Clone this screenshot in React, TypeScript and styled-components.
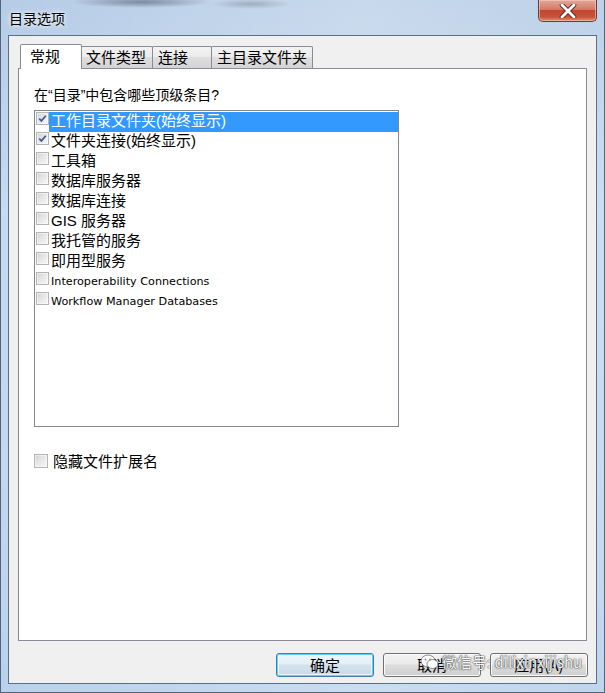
import React from "react";
import styled, { createGlobalStyle } from "styled-components";

const Global = createGlobalStyle`
  html, body { margin: 0; padding: 0; background: #fff; }
  body {
    width: 605px; height: 693px; overflow: hidden;
    font-family: "DejaVu Sans", "Noto Sans CJK SC", sans-serif;
    color: #000;
  }
  * { box-sizing: border-box; }
`;

const Window = styled.div`
  position: relative;
  width: 605px;
  height: 693px;
  display: flex;
  flex-direction: column;
  padding: 0 7px 8px 7px;
  border-left: 1px solid #54637a;
  border-right: 1px solid #54637a;
  border-bottom: 1px solid #54637a;
  background:
    radial-gradient(ellipse 70px 6px at 140px 2px, rgba(70, 80, 95, 0.55), transparent),
    radial-gradient(ellipse 40px 5px at 250px 4px, rgba(90, 100, 115, 0.35), transparent),
    linear-gradient(90deg, rgba(255,255,255,0) 0%, rgba(255,255,255,0.25) 60%, rgba(255,255,255,0.1) 100%),
    linear-gradient(180deg, #b5cce6 0%, #c6daf0 30%, #c2d8ef 70%, #b9d1eb 100%);
`;

const TitleBar = styled.div`
  height: 35px;
  flex: none;
  display: flex;
  justify-content: space-between;
  align-items: flex-start;
  margin-left: -7px;
  margin-right: -7px;
  padding-left: 8px;
  padding-right: 7px;
`;

const Title = styled.div`
  padding-top: 9px;
  font-size: 14px;
  line-height: 18px;
  font-family: "Noto Sans CJK SC", sans-serif;
  color: #000;
  text-shadow: 0 0 6px rgba(255, 255, 255, 0.9), 0 0 3px rgba(255, 255, 255, 0.9);
`;

const CloseButton = styled.div`
  width: 59px;
  height: 22px;
  border: 1px solid #6a3a36;
  border-top: none;
  border-radius: 0 0 5px 5px;
  background: linear-gradient(180deg, #e0a898 0%, #d57a68 45%, #c34630 50%, #c6523b 80%, #e28e70 100%);
  box-shadow: inset 0 0 0 1px rgba(255, 210, 200, 0.55);
  display: flex;
  align-items: center;
  justify-content: center;
`;

const Client = styled.div`
  flex: 1;
  display: flex;
  flex-direction: column;
  background: #f0f0f0;
  border: 1px solid #5b6f88;
  padding: 7px 9px 6px 9px;
`;

const TabStrip = styled.div`
  display: flex;
  align-items: flex-end;
  height: 25px;
  padding-left: 2px;
  position: relative;
  z-index: 1;
`;

const Tab = styled.div<{ $active?: boolean; $w: number }>`
  width: ${(p) => p.$w}px;
  height: ${(p) => (p.$active ? 25 : 22)}px;
  margin-bottom: ${(p) => (p.$active ? -1 : 0)}px;
  margin-left: ${(p) => (p.$active ? -2 : -1)}px;
  margin-right: ${(p) => (p.$active ? -1 : 0)}px;
  position: relative;
  z-index: ${(p) => (p.$active ? 2 : 1)};
  border: 1px solid #898c95;
  border-bottom: none;
  border-radius: 2px 2px 0 0;
  background: ${(p) =>
    p.$active
      ? "#ffffff"
      : "linear-gradient(180deg, #f3f3f3 0%, #ececec 45%, #dedede 50%, #d4d4d4 100%)"};
  font-family: "Noto Sans CJK SC", sans-serif;
  font-size: 15px;
  line-height: 20px;
  padding: ${(p) => (p.$active ? "1px 0 0 9px" : "0 0 0 5px")};
  white-space: nowrap;
  &:first-child { margin-left: 0; }
`;

const Panel = styled.div`
  flex: 1;
  background: #ffffff;
  border: 1px solid #898c95;
  padding: 17px 15px 0 15px;
  display: flex;
  flex-direction: column;
  align-items: flex-start;
`;

const Prompt = styled.div`
  font-family: "Liberation Sans", "Noto Sans CJK SC", sans-serif;
  font-size: 14px;
  line-height: 18px;
`;

const ListBox = styled.div`
  margin-top: 6px;
  width: 365px;
  height: 317px;
  border: 1px solid #828790;
  background: #fff;
  padding: 1px 0 0 1px;
  display: flex;
  flex-direction: column;
`;

const Row = styled.div`
  height: 20px;
  display: flex;
  align-items: stretch;
`;

const Box = styled.span<{ $size?: number }>`
  flex: none;
  width: ${(p) => p.$size ?? 13}px;
  height: ${(p) => p.$size ?? 13}px;
  border: 1px solid #b4b4b4;
  background: linear-gradient(135deg, #d2d2d2 0%, #e6e6e6 45%, #f7f7f7 100%);
  box-shadow: inset 0 0 0 1px rgba(255, 255, 255, 0.5);
  display: flex;
  align-items: center;
  justify-content: center;
`;

const ItemLabel = styled.span<{ $selected?: boolean; $latin?: boolean }>`
  flex: 1;
  padding-left: 2px;
  background: ${(p) => (p.$selected ? "#3399ff" : "transparent")};
  color: ${(p) => (p.$selected ? "#ffffff" : "#000000")};
  font-family: ${(p) =>
    p.$latin ? '"DejaVu Sans", sans-serif' : '"Liberation Sans", "Noto Sans CJK SC", sans-serif'};
  font-size: ${(p) => (p.$latin ? "11.2px" : "15px")};
  line-height: ${(p) => (p.$latin ? "19px" : "18px")};
  white-space: nowrap;
`;

const HideRow = styled.label`
  margin-top: 26px;
  display: flex;
  align-items: center;
  gap: 5px;
  font-family: "Noto Sans CJK SC", sans-serif;
  font-size: 15px;
  line-height: 16px;
`;

const ButtonRow = styled.div`
  margin-top: 12px;
  display: flex;
  justify-content: flex-end;
  gap: 9px;
  margin-right: -1px;
`;

const Button = styled.div<{ $default?: boolean }>`
  width: 98px;
  height: 24px;
  border-radius: 3px;
  border: 1px solid ${(p) => (p.$default ? "#3c7fb1" : "#707070")};
  background: ${(p) =>
    p.$default
      ? "linear-gradient(180deg, #eef5fa 0%, #e3eef6 45%, #d3e2ed 50%, #c9dbe8 100%)"
      : "linear-gradient(180deg, #f2f2f2 0%, #ebebeb 45%, #dddddd 50%, #cfcfcf 100%)"};
  box-shadow: ${(p) =>
    p.$default ? "inset 0 0 0 1px #62d1f2, inset 0 0 0 2px rgba(255,255,255,0.6)" : "inset 0 0 0 1px #fbfbfb"};
  display: flex;
  align-items: center;
  justify-content: center;
  font-family: "Noto Sans CJK SC", sans-serif;
  font-size: 15px;
  line-height: 18px;
  color: #000;
`;

const Watermark = styled.div`
  position: absolute;
  left: 419px;
  top: 651px;
  display: flex;
  align-items: center;
  gap: 2px;
  font-family: "Noto Sans CJK SC", sans-serif;
  font-size: 15px;
  line-height: 22px;
  color: rgba(255, 255, 255, 0.95);
  text-shadow: 0 0 1px #555, 0 0 1px #555, 0 0 2px rgba(70, 70, 70, 0.8);
  white-space: nowrap;
  letter-spacing: 0px;
`;

const items = [
  { text: "工作目录文件夹(始终显示)", checked: true, selected: true },
  { text: "文件夹连接(始终显示)", checked: true },
  { text: "工具箱" },
  { text: "数据库服务器" },
  { text: "数据库连接" },
  { text: "GIS 服务器" },
  { text: "我托管的服务" },
  { text: "即用型服务" },
  { text: "Interoperability Connections", latin: true },
  { text: "Workflow Manager Databases", latin: true },
] as { text: string; checked?: boolean; selected?: boolean; latin?: boolean }[];

const Check = () => (
  <svg width="9" height="9" viewBox="0 0 9 9">
    <path d="M1.2 4.6 L3.4 6.9 L7.8 1.8" fill="none" stroke="#3a5c9a" strokeWidth="1.7" />
  </svg>
);

const WeChatIcon = () => (
  <svg width="20" height="18" viewBox="0 0 20 18">
    <ellipse cx="8" cy="8" rx="7" ry="6" fill="rgba(255,255,255,0.95)" stroke="rgba(90,90,90,0.7)" strokeWidth="1" />
    <ellipse cx="12.5" cy="11" rx="5.5" ry="4.5" fill="rgba(255,255,255,0.95)" stroke="rgba(90,90,90,0.7)" strokeWidth="1" />
    <circle cx="5.5" cy="6.5" r="0.9" fill="#888" />
    <circle cx="10" cy="6.5" r="0.9" fill="#888" />
  </svg>
);

export default function App() {
  return (
    <>
      <Global />
      <Window>
        <TitleBar>
          <Title>目录选项</Title>
          <CloseButton>
            <svg width="20" height="14" viewBox="0 0 20 14">
              <path
                d="M4 1 L16 13 M16 1 L4 13"
                fill="none"
                stroke="#5a2a24"
                strokeWidth="4.6"
                strokeLinecap="round"
              />
              <path
                d="M4 1 L16 13 M16 1 L4 13"
                fill="none"
                stroke="#ffffff"
                strokeWidth="2.8"
                strokeLinecap="round"
              />
            </svg>
          </CloseButton>
        </TitleBar>
        <Client>
          <TabStrip>
            <Tab $active $w={62}>常规</Tab>
            <Tab $w={73}>文件类型</Tab>
            <Tab $w={60}>连接</Tab>
            <Tab $w={102}>主目录文件夹</Tab>
          </TabStrip>
          <Panel>
            <Prompt>在“目录”中包含哪些顶级条目?</Prompt>
            <ListBox>
              {items.map((it) => (
                <Row key={it.text}>
                  <Box>{it.checked && <Check />}</Box>
                  <ItemLabel $selected={it.selected} $latin={it.latin}>
                    {it.text}
                  </ItemLabel>
                </Row>
              ))}
            </ListBox>
            <HideRow>
              <Box $size={14} />
              隐藏文件扩展名
            </HideRow>
          </Panel>
          <ButtonRow>
            <Button $default>确定</Button>
            <Button>取消</Button>
            <Button>应用(A)</Button>
          </ButtonRow>
        </Client>
        <Watermark>
          <WeChatIcon />
          <span>微信号: dilixinxijishu</span>
        </Watermark>
      </Window>
    </>
  );
}
